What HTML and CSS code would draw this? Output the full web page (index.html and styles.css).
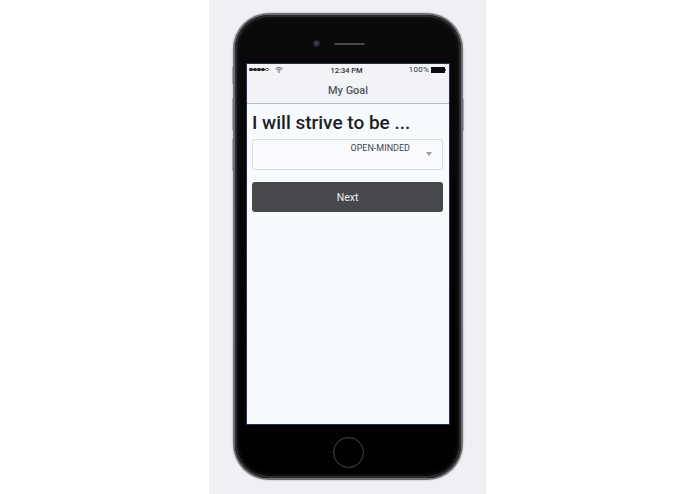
FILE: index.html
```html
<!DOCTYPE html>
<html lang="en">
<head>
<meta charset="utf-8">
<title>My Goal</title>
<link rel="stylesheet" href="styles.css">
</head>
<body>
<main class="panel">
  <div class="phone">
    <span class="side-btn side-mute"></span>
    <span class="side-btn side-up"></span>
    <span class="side-btn side-down"></span>
    <span class="side-btn side-power"></span>
    <div class="inner">
      <div class="top-bezel">
        <span class="camera"></span>
        <span class="speaker"></span>
      </div>
      <div class="screen">
        <header class="app-head">
          <div class="status">
            <div class="status-left">
              <span class="dots"><i></i><i></i><i></i><i></i><i class="off"></i></span>
              <svg class="wifi" viewBox="0 0 8 6" width="8" height="6"><path d="M.5 1.8C2.6-.1 5.4-.1 7.5 1.8M1.7 3C3 1.8 5 1.8 6.3 3M2.9 4.2C3.5 3.7 4.5 3.7 5.1 4.2" fill="none" stroke="#444" stroke-width=".8"/><path d="M4 6 3.2 5c.5-.3 1.1-.3 1.6 0z" fill="#444"/></svg>
            </div>
            <span class="time">12:34 PM</span>
            <div class="status-right">
              <span class="pct">100%</span>
              <span class="battery"></span>
              <span class="nub"></span>
            </div>
          </div>
          <div class="nav-title">My Goal</div>
        </header>
        <section class="content">
          <h1 class="headline">I will strive to be ...</h1>
          <div class="select">
            <span class="select-value">OPEN-MINDED</span>
            <span class="caret"></span>
          </div>
          <button class="next" type="button">Next</button>
        </section>
      </div>
      <div class="bottom-bezel"><span class="home"></span></div>
    </div>
  </div>
</main>
</body>
</html>
```
FILE: styles.css
```css
* { box-sizing: border-box; }
html, body { margin: 0; height: 100%; background: #fff; }
body { display: flex; justify-content: center; font-family: Roboto, "Liberation Sans", sans-serif; overflow: hidden; width: 695px; height: 494px; }
.panel { width: 277px; height: 494px; background: #eff0f4; padding: 13px 23px 0 24px; }
.phone { position: relative; width: 230px; height: 467px; border-radius: 36px; padding: 2px; background: #6f7073; box-shadow: 0 0 2px rgba(60,60,65,.45); }
.inner { width: 100%; height: 100%; border-radius: 34px; padding: 0 11px; background: linear-gradient(#0a0a0a, #030303 60%, #000); box-shadow: inset 0 0 0 2px #2b2b2d, inset 0 0 4px 3px #161617; display: flex; flex-direction: column; }
.side-btn { position: absolute; width: 1px; background: #a9aaae; }
.side-mute { left: -1px; top: 54px; height: 17px; }
.side-up { left: -1px; top: 85px; height: 32px; }
.side-down { left: -1px; top: 126px; height: 32px; }
.side-power { right: -1px; top: 86px; height: 32px; }
.top-bezel { height: 48px; flex: none; display: flex; justify-content: center; align-items: center; padding: 9px 19px 0 0; gap: 14px; }
.camera { width: 7px; height: 7px; border-radius: 50%; background: radial-gradient(#4a4d60, #1c1c22 70%); }
.speaker { width: 31px; height: 2px; border-radius: 1px; background: #48484a; }
.screen { height: 362px; flex: none; background: #f7faff; border: 1px solid #26324e; overflow: hidden; display: flex; flex-direction: column; }
.app-head { height: 40px; flex: none; background: #f1f3f8; border-bottom: 1px solid #b9bcc4; }
.status { height: 13px; display: grid; grid-template-columns: 1fr auto 1fr; align-items: center; padding: 0 3px 0 2px; font-size: 7.5px; color: #2e2e30; }
.status-left { display: flex; align-items: center; gap: 6px; margin-top: -2px; }
.dots { display: flex; gap: .5px; }
.dots i { width: 3.5px; height: 3.5px; border-radius: 50%; background: #222; }
.dots i.off { background: none; border: .5px solid #444; }
.wifi { display: block; }
.time { font-weight: 500; font-size: 7.5px; margin-right: 2px; }
.status-right { display: flex; align-items: center; justify-content: flex-end; margin-top: -2px; }
.pct { font-size: 8px; margin-right: 2px; letter-spacing: .2px; }
.battery { width: 14px; height: 6px; background: #0c0c0e; }
.nub { width: 1px; height: 2px; background: #555; }
.nav-title { height: 26px; display: flex; align-items: center; justify-content: center; font-size: 11px; font-weight: 500; color: #55575c; }
.content { padding: 0 6px 0 5px; flex: 1; }
.headline { margin: 7px 0 4px; font-size: 19px; line-height: 24px; font-weight: 500; color: #1d1e22; letter-spacing: 0; }
.select { position: relative; height: 31px; background: #f9fbff; border: 1px solid #d9dde5; border-radius: 2px; padding-top: 2px; padding-right: 32px; text-align: right; font-size: 9px; line-height: 12px; color: #45474b; }
.caret { position: absolute; right: 10px; top: 12px; border-left: 3.5px solid transparent; border-right: 3.5px solid transparent; border-top: 4px solid #9a9ca1; }
.next { display: block; width: 100%; height: 30px; margin-top: 12px; border: 0; border-radius: 3px; background: #46484c; color: #eef0f2; font: 400 10.5px Roboto, "Liberation Sans", sans-serif; }
.bottom-bezel { flex: 1; display: flex; align-items: flex-start; justify-content: center; padding-top: 12px; }
.home { width: 31px; height: 31px; border-radius: 50%; border: 1.2px solid #4a4a4c; }
```
